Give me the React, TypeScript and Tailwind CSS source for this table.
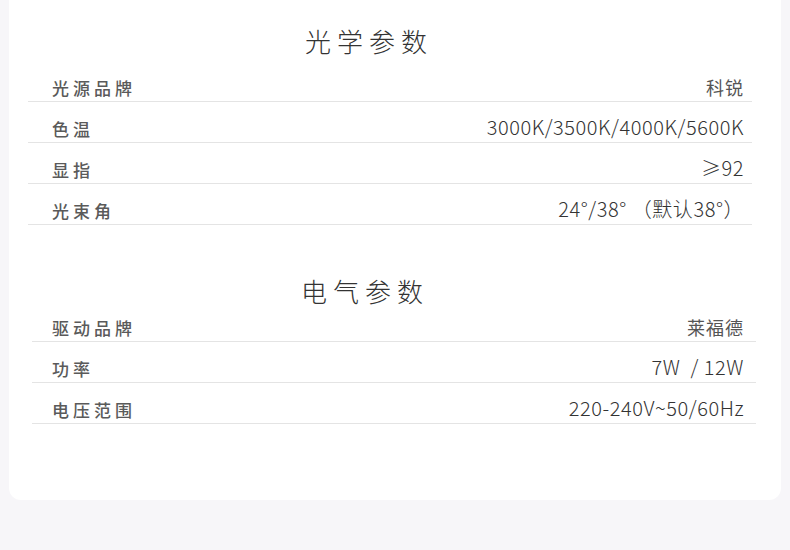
import React from 'react';

type Row = {
  label: string;
  value: string;
  cjk?: boolean;
};

const optical: Row[] = [
  { label: '光源品牌', value: '科锐', cjk: true },
  { label: '色温', value: '3000K/3500K/4000K/5600K' },
  { label: '显指', value: '≥92' },
  { label: '光束角', value: '24°/38° （默认38°）' },
];

const electrical: Row[] = [
  { label: '驱动品牌', value: '莱福德', cjk: true },
  { label: '功率', value: '7W  / 12W' },
  { label: '电压范围', value: '220-240V~50/60Hz' },
];

const SpecRow = ({ row, pl, pr }: { row: Row; pl: string; pr: string }) => (
  <div className={`flex h-[41px] items-end justify-between border-b border-[#e4e4e4] pb-[5px] ${pl} ${pr}`}>
    <span className="text-[17px] leading-none font-medium tracking-[4px] text-[#5a5a5a]">{row.label}</span>
    <span
      className={
        row.cjk
          ? 'text-[18px] leading-none font-normal tracking-[1px] text-[#555] whitespace-pre'
          : 'text-[20px] leading-none font-light tracking-[0.55px] text-[#333] whitespace-pre'
      }
    >
      {row.value}
    </span>
  </div>
);

export default function App() {
  return (
    <div
      className="min-h-[550px] bg-[#f7f6f9] px-[9px] pb-[50px]"
      style={{ fontFamily: '"Noto Sans CJK SC", "Noto Sans", sans-serif' }}
    >
      <div className="h-[500px] rounded-b-[12px] bg-white">
        {/* 光学参数 */}
        <div className="flex justify-center pt-[33px] pr-[52px]">
          <h2 className="text-[26px] leading-[16px] font-light tracking-[6px] text-[#333]">光学参数</h2>
        </div>
        <div className="mt-[12px] ml-[19px] mr-[29px]">
          {optical.map((row) => (
            <SpecRow key={row.label} row={row} pl="pl-[24px]" pr="pr-[8px]" />
          ))}
        </div>

        {/* 电气参数 */}
        <div className="mt-[58px] mb-[2px] flex justify-center pr-[60px]">
          <h2 className="text-[26px] leading-[16px] font-light tracking-[6px] text-[#333]">电气参数</h2>
        </div>
        <div className="ml-[23px] mr-[25px]">
          {electrical.map((row) => (
            <SpecRow key={row.label} row={row} pl="pl-[20px]" pr="pr-[12px]" />
          ))}
        </div>
      </div>
    </div>
  );
}
